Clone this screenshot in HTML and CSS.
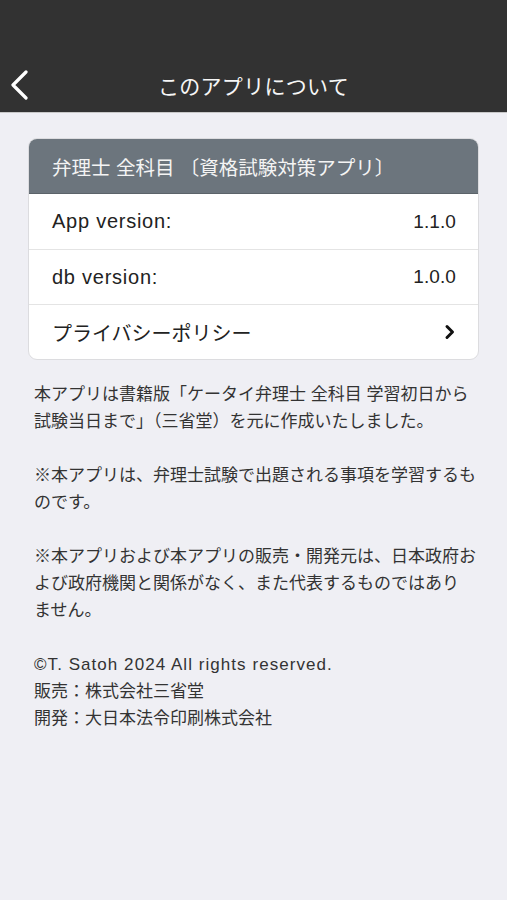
FILE: index.html
```html
<!DOCTYPE html>
<html lang="ja">
<head>
<meta charset="utf-8">
<title>このアプリについて</title>
<link rel="stylesheet" href="styles.css">
</head>
<body>
<header class="topbar">
  <div class="navbar">
    <span class="back">
      <svg width="20" height="30" viewBox="0 0 20 30"><polyline points="16,2 3,15 16,28" fill="none" stroke="#ffffff" stroke-width="3.2" stroke-linecap="round" stroke-linejoin="round"/></svg>
    </span>
    <h1 class="title">このアプリについて</h1>
  </div>
</header>
<main class="content">
  <section class="card">
    <div class="card-head">弁理士 全科目 〔資格試験対策アプリ〕</div>
    <div class="row"><span class="label">App version:</span><span class="value">1.1.0</span></div>
    <div class="row"><span class="label">db version:</span><span class="value">1.0.0</span></div>
    <div class="row"><span>プライバシーポリシー</span>
      <svg class="chev" width="12" height="16" viewBox="0 0 12 16"><polyline points="3,2.5 8.5,8 3,13.5" fill="none" stroke="#111" stroke-width="3" stroke-linecap="round" stroke-linejoin="round"/></svg>
    </div>
  </section>
  <div class="notes">
    <p>本アプリは書籍版「ケータイ弁理士 全科目 学習初日から<br>試験当日まで」（三省堂）を元に作成いたしました。</p>
    <p>※本アプリは、弁理士試験で出題される事項を学習するも<br>のです。</p>
    <p>※本アプリおよび本アプリの販売・開発元は、日本政府お<br>よび政府機関と関係がなく、また代表するものではあり<br>ません。</p>
    <p><span class="latin">©T. Satoh 2024 All rights reserved.</span><br>販売：株式会社三省堂<br>開発：大日本法令印刷株式会社</p>
  </div>
</main>
</body>
</html>
```
FILE: styles.css
```css
* { box-sizing: border-box; }
html, body { margin: 0; padding: 0; }
body {
  background: #efeff4;
  font-family: "Liberation Sans", "Noto Sans CJK JP", sans-serif;
  color: #333;
  min-height: 900px;
}
.topbar {
  background: #323232;
  padding-top: 57px;
  border-bottom: 1px solid #c8c8c8;
}
.navbar {
  height: 55px;
  display: flex;
  align-items: center;
  justify-content: center;
  position: relative;
}
.back {
  position: absolute;
  left: 10px;
  top: 13px;
  display: flex;
}
.title {
  margin: 0;
  font-size: 21px;
  font-weight: 400;
  color: #f6f6f6;
  letter-spacing: 0.3px;
}
.content {
  padding: 25px 28px 0;
}
.card {
  background: #fff;
  border: 1px solid #dcdcdf;
  border-radius: 9px;
  overflow: hidden;
}
.card-head {
  background: #6c757d;
  color: #f4f4f4;
  height: 55px;
  display: flex;
  align-items: center;
  padding: 0 23px;
  font-size: 19.5px;
  border-bottom: 1px solid #5b6369;
}
.row {
  height: 55px;
  display: flex;
  align-items: center;
  justify-content: space-between;
  padding: 0 22px 0 23px;
  font-size: 20px;
  color: #222;
  border-top: 1px solid #e4e4e4;
}
.card-head + .row { border-top: none; }
.label { letter-spacing: 0.75px; }
.value { font-size: 19px; letter-spacing: 0.1px; }
.notes {
  padding: 21px 0 0 6px;
  font-size: 17px;
  line-height: 27px;
  color: #333;
}
.notes p { margin: 0 0 27px; }
.latin { letter-spacing: 1.05px; }
```
